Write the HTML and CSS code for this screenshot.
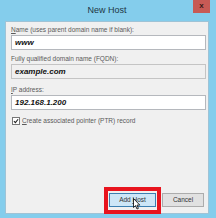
FILE: index.html
```html
<!DOCTYPE html>
<html>
<head>
<meta charset="utf-8">
<link rel="stylesheet" href="styles.css">
</head>
<body>
<div class="window">
  <div class="titlebar">
    <span></span>
    <span class="title">New Host</span>
    <span class="close">x</span>
  </div>
  <div class="content">
    <label class="lbl"><u>N</u>ame (uses parent domain name if blank):</label>
    <div class="field">www</div>
    <label class="lbl lbl2">Fully qualified domain name (FQDN):</label>
    <div class="field disabled">example.com</div>
    <label class="lbl lbl3"><u>I</u>P address:</label>
    <div class="field">192.168.1.200</div>
    <div class="check">
      <span class="box"><svg width="8" height="8" viewBox="0 0 8 8"><path d="M1.2 4.2 L3.2 6.2 L6.8 1.6" fill="none" stroke="#222" stroke-width="1.4"/></svg></span>
      <span><u>C</u>reate associated pointer (PTR) record</span>
    </div>
    <div class="buttons">
      <span class="btn primary">Add <u>H</u>ost</span>
      <span class="btn">Cancel</span>
    </div>
  </div>
  <div class="highlight"></div>
  <svg class="cursor" width="8" height="12" viewBox="0 0 8 12"><path d="M0.5 0.5 L0.5 9.5 L2.6 7.6 L4 11 L5.4 10.4 L4 7.1 L6.8 7.1 Z" fill="#fff" stroke="#000" stroke-width="0.8"/></svg>
</div>
</body>
</html>
```
FILE: styles.css
```css
* { box-sizing: border-box; }
html, body { margin: 0; padding: 0; }
body { background: #7fcbeb; }
.window {
  position: relative;
  width: 216px;
  height: 218px;
  background: #84cdec;
  padding: 0 7px 4px 5px;
  display: flex;
  flex-direction: column;
  font-family: "Liberation Sans", Arial, sans-serif;
}
.titlebar {
  height: 21px;
  display: grid;
  grid-template-columns: 1fr auto 1fr;
  align-items: start;
}
.title {
  font-size: 9px;
  line-height: 21px;
  color: #1d3644;
}
.close {
  justify-self: end;
  margin-right: -1px;
  width: 17px;
  height: 13px;
  background: #c75a55;
  color: #3a1a18;
  font-size: 8px;
  font-weight: bold;
  line-height: 12px;
  text-align: center;
}
.content {
  flex: 1;
  background: #f0f0f0;
  border: 1px solid #9fc3d6;
  padding: 3px 2px 6px 5px;
  display: flex;
  flex-direction: column;
}
.lbl {
  display: block;
  font-size: 6.5px;
  line-height: 9px;
  color: #5a5a5a;
  margin-bottom: 1px;
}
.lbl2 { margin-top: 4px; }
.lbl3 { margin-top: 6px; }
.field {
  height: 15px;
  background: #fff;
  border: 1px solid #b5b8bd;
  padding: 0 3px;
  font-size: 8px;
  font-weight: bold;
  font-style: italic;
  line-height: 13px;
  color: #111;
}
.field.disabled { background: #f0f0f0; border-color: #c4c4c4; }
.check {
  margin-top: 6px;
  display: flex;
  align-items: center;
  gap: 2px;
  font-size: 6.5px;
  line-height: 9px;
  color: #5a5a5a;
  padding-left: 1px;
}
.box {
  width: 8px;
  height: 8px;
  border: 1px solid #777;
  background: #fff;
  display: flex;
  align-items: center;
  justify-content: center;
}
.box svg { display: block; }
.buttons {
  margin-top: auto;
  display: flex;
  justify-content: flex-end;
  gap: 6px;
  padding-right: 2px;
}
.btn {
  height: 14px;
  width: 42px;
  border: 1px solid #acacac;
  background: #e1e1e1;
  font-size: 6.5px;
  line-height: 12px;
  text-align: center;
  color: #333;
}
.btn.primary {
  width: 47px;
  border-color: #3c7fb1;
  background: #cde6f7;
}
.highlight {
  position: absolute;
  left: 104px;
  top: 187px;
  width: 57px;
  height: 27px;
  border: 4px solid #e8141e;
}
.cursor {
  position: absolute;
  left: 133px;
  top: 198px;
}
```
